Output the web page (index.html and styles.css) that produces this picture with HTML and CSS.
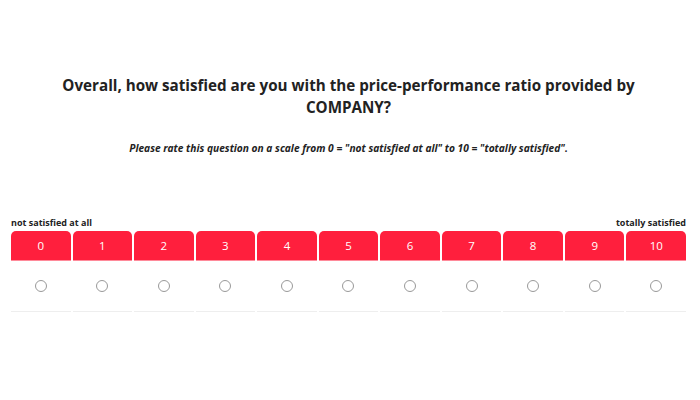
FILE: index.html
```html
<!DOCTYPE html>
<html>
<head>
<meta charset="utf-8">
<link rel="stylesheet" href="styles.css">
</head>
<body>
<div class="page">
  <h1 class="question">Overall, how satisfied are you with the price-performance ratio provided by COMPANY?</h1>
  <p class="hint">Please rate this question on a scale from 0 = "not satisfied at all" to 10 = "totally satisfied".</p>
  <div class="scale">
    <div class="anchors">
      <span>not satisfied at all</span>
      <span>totally satisfied</span>
    </div>
    <div class="grid">
      <div class="head">0</div><div class="head">1</div><div class="head">2</div><div class="head">3</div><div class="head">4</div><div class="head">5</div><div class="head">6</div><div class="head">7</div><div class="head">8</div><div class="head">9</div><div class="head">10</div>
      <div class="cell"><span class="radio"></span></div>
      <div class="cell"><span class="radio"></span></div>
      <div class="cell"><span class="radio"></span></div>
      <div class="cell"><span class="radio"></span></div>
      <div class="cell"><span class="radio"></span></div>
      <div class="cell"><span class="radio"></span></div>
      <div class="cell"><span class="radio"></span></div>
      <div class="cell"><span class="radio"></span></div>
      <div class="cell"><span class="radio"></span></div>
      <div class="cell"><span class="radio"></span></div>
      <div class="cell"><span class="radio"></span></div>
    </div>
  </div>
</div>
</body>
</html>
```
FILE: styles.css
```css
html, body {
  margin: 0;
  padding: 0;
  background: #fff;
}
body {
  font-family: "Open Sans", sans-serif;
  color: #222;
}
.page {
  padding: 74px 14px 0 11px;
}
.question {
  margin: 0 auto;
  width: 600px;
  text-align: center;
  font-size: 15.2px;
  font-weight: 700;
  line-height: 22px;
}
.hint {
  margin: 23px 0 0;
  text-align: center;
  font-size: 10.2px;
  font-style: italic;
  font-weight: 700;
  line-height: 14px;
}
.scale {
  margin-top: 62px;
}
.anchors {
  display: flex;
  justify-content: space-between;
  font-size: 9px;
  font-weight: 700;
  line-height: 12px;
  margin-bottom: 2px;
}
.grid {
  display: grid;
  grid-template-columns: repeat(11, 1fr);
  column-gap: 2px;
}
.head {
  background: #ff1f3d;
  color: #fff;
  text-align: center;
  font-size: 11.5px;
  line-height: 29px;
  height: 29px;
  border-radius: 5px 5px 0 0;
  border-bottom: 1px solid #ff8a9a;
}
.cell {
  height: 50px;
  border-bottom: 1px solid #eee;
  display: flex;
  align-items: center;
  justify-content: center;
}
.radio {
  width: 10px;
  height: 10px;
  border: 1px solid #999;
  border-radius: 50%;
  background: #fff;
}
```
